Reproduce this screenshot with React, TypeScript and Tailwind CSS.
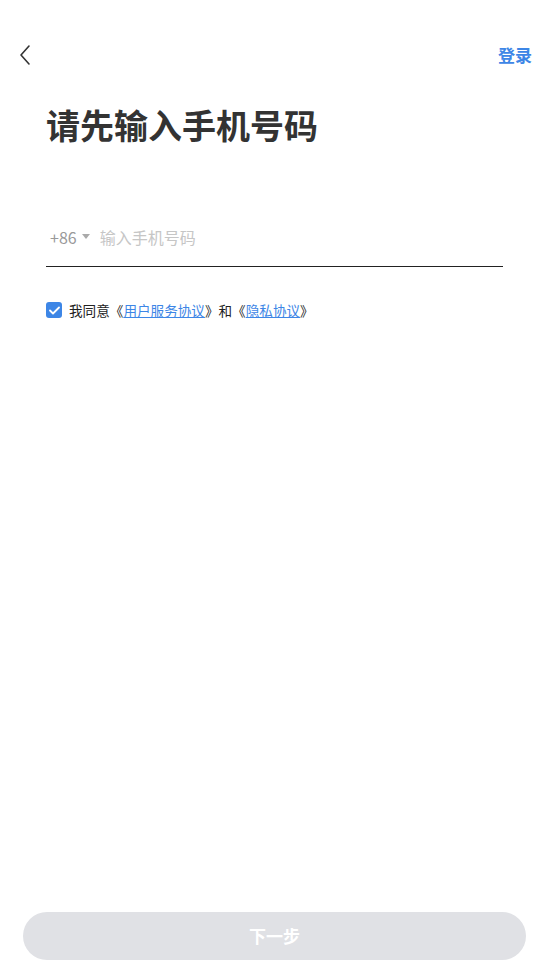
const font = { fontFamily: '"Noto Sans CJK SC", "Noto Sans", sans-serif' };

export default function App() {
  return (
    <div className="relative flex h-[976px] w-full flex-col bg-white" style={font}>
      {/* top bar */}
      <div className="flex h-[40px] items-center justify-between pl-[18px] pr-[17px] mt-[35px]">
        <svg width="14" height="22" viewBox="0 0 14 22" fill="none">
          <path d="M11 2 L3 11 L11 20" stroke="#333" strokeWidth="1.6" strokeLinecap="round" strokeLinejoin="round" />
        </svg>
        <span className="text-[17px] font-bold text-[#3d86e6]">登录</span>
      </div>

      <div className="px-[46px]">
        <h1 className="mt-[28px] text-[34px] font-bold leading-[44px] text-[#333]">请先输入手机号码</h1>

        {/* phone input */}
        <div className="mt-[61px] flex h-[59px] w-[457px] items-center border-b border-[#222]">
          <span className="ml-[4px] text-[16px] text-[#999]">+86</span>
          <svg className="ml-[5px]" width="8" height="6" viewBox="0 0 8 6">
            <path d="M0 0 H8 L4 5 Z" fill="#aaa" />
          </svg>
          <span className="ml-[10px] text-[16px] text-[#c6c6c6]">输入手机号码</span>
        </div>

        {/* agreement */}
        <div className="mt-[33px] flex items-center">
          <div className="flex h-[16px] w-[16px] items-center justify-center rounded-[3px] bg-[#3d86e6]">
            <svg width="11" height="9" viewBox="0 0 11 9" fill="none">
              <path d="M1 4.5 L4 7.5 L10 1.5" stroke="white" strokeWidth="1.8" strokeLinecap="round" strokeLinejoin="round" />
            </svg>
          </div>
          <span className="ml-[7px] text-[13.6px] text-[#222]">
            我同意《<span className="text-[#3d86e6] underline">用户服务协议</span>》和《<span className="text-[#3d86e6] underline">隐私协议</span>》
          </span>
        </div>
      </div>

      <div className="mt-auto mb-[16px] px-[23px]">
        <button className="flex h-[48px] w-full items-center justify-center rounded-full bg-[#e0e1e5] text-[17px] font-bold text-white">
          下一步
        </button>
      </div>
    </div>
  );
}
